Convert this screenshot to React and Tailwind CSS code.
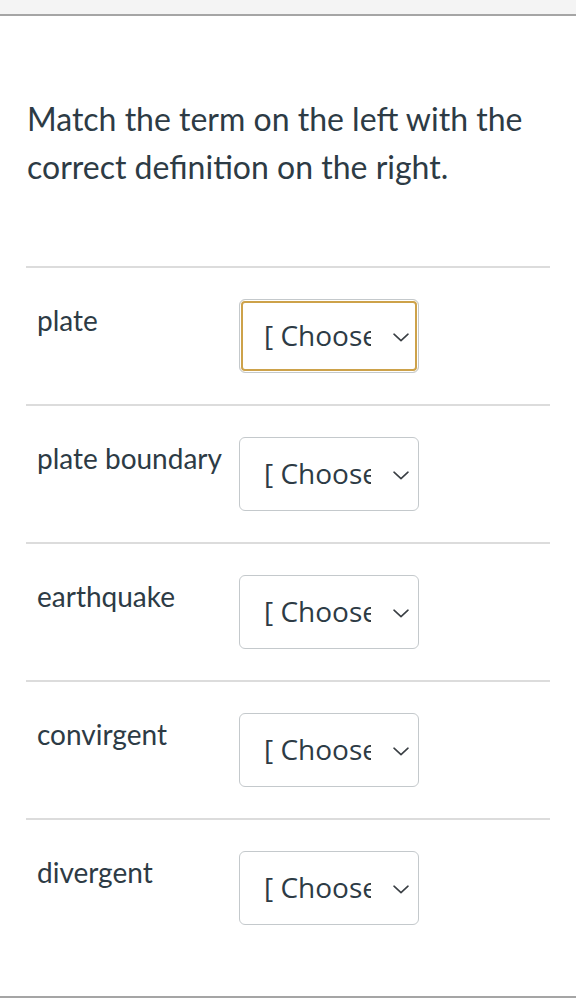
const terms = ["plate", "plate boundary", "earthquake", "convirgent", "divergent"];

export default function App() {
  return (
    <div className="w-[576px] h-[1006px] bg-white flex flex-col overflow-hidden">
      {/* top bar */}
      <div className="h-[16px] bg-[#f4f4f4] border-b-2 border-[#a5a5a5] shrink-0" />

      <div className="flex-1 px-[26px]" style={{ fontFamily: "Lato, 'Open Sans', sans-serif" }}>
        <p className="mt-[79px] text-[32px] leading-[48px] text-[#2d3b45] pl-[1px]">
          Match the term on the left with the correct definition on the right.
        </p>

        <div className="mt-[75px] w-[524px]">
          {terms.map((t, i) => (
            <MatchRow key={t} term={t} focused={i === 0} />
          ))}
        </div>
      </div>

      <div className="h-[10px] border-t-2 border-[#a5a5a5] shrink-0 bg-white" />
    </div>
  );
}

const MatchRow = ({ term, focused }) => {
  return (
    <div className="flex items-start border-t-[2px] border-[#dcdcdc] pt-[31px] pb-[31px] pl-[11px]">
      <div className="w-[202px] text-[28px] leading-[42px] text-[#2d3b45]">
        {term}
      </div>
      <SelectBox focused={focused} />
    </div>
  );
};

const SelectBox = ({ focused }) => {
  return (
    <div
      className={`relative w-[180px] h-[74px] rounded-[6px] border border-[#c4c9cc] bg-white flex items-center ${
        focused
          ? "shadow-[inset_0_0_0_1px_#ffffff,inset_0_0_0_3px_#cda24a]"
          : ""
      }`}
    >
      <div
        className="ml-[24px] -mt-[3px] w-[107px] overflow-hidden whitespace-nowrap text-[28px] leading-[36px] text-[#2d3b45]"
        style={{ fontFamily: "'Open Sans', sans-serif" }}
      >
        [ Choose ]
      </div>
      <svg
        className="absolute right-[8px] top-1/2 -translate-y-[40%]"
        width="18"
        height="12"
        viewBox="0 0 18 12"
        fill="none"
      >
        <path d="M2 3 L9 9.5 L16 3" stroke="#3a3f44" strokeWidth="1.6" strokeLinecap="round" strokeLinejoin="round" />
      </svg>
    </div>
  );
};
